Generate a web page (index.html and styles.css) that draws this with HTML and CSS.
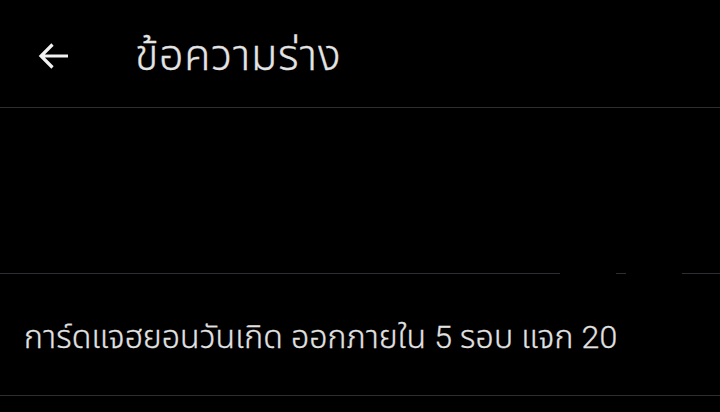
FILE: index.html
```html
<!DOCTYPE html>
<html lang="th">
<head>
<meta charset="utf-8">
<link rel="stylesheet" href="styles.css">
</head>
<body>
<div class="screen">
  <header class="topbar">
    <button class="back" aria-label="back">
      <svg width="32" height="30" viewBox="0 0 32 30"><path d="M31 15H4M15.5 3.5L4 15l11.5 11.5" fill="none" stroke="#f2f2f2" stroke-width="3.2" stroke-linecap="butt" stroke-linejoin="miter"/></svg>
    </button>
    <h1 class="title">ข้อความร่าง</h1>
  </header>
  <div class="blank"></div>
  <div class="row">
    <p class="row-text">การ์ดแจฮยอนวันเกิด ออกภายใน 5 รอบ แจก 20</p>
    <span class="gap g1"></span>
    <span class="gap g2"></span>
  </div>
</div>
</body>
</html>
```
FILE: styles.css
```css
html, body { margin: 0; padding: 0; background: #000; }
.screen {
  width: 720px;
  height: 412px;
  background: #000;
  color: #e2e2e2;
  font-family: Roboto, "Noto Sans Thai", "Noto Sans", sans-serif;
  overflow: hidden;
}
.topbar {
  height: 107px;
  display: flex;
  align-items: center;
  border-bottom: 1px solid #2e2e32;
}
.back {
  background: none;
  border: 0;
  padding: 0;
  margin: 4px 0 0 37px;
  width: 32px;
  height: 30px;
  display: flex;
}
.title {
  margin: 6px 0 0 66px;
  font-size: 43px;
  font-weight: 300;
  letter-spacing: 0.75px;
  -webkit-text-stroke: 0.3px #e4e4e4;
  color: #e4e4e4;
}
.blank { height: 165px; }
.row {
  position: relative;
  height: 123px;
  border-top: 1px solid #2e2e32;
  border-bottom: 1px solid #2e2e32;
  display: flex;
  align-items: center;
  box-sizing: border-box;
}
.row-text {
  margin: 6px 0 0 24px;
  font-size: 32px;
  font-weight: 300;
  letter-spacing: 0.15px;
  -webkit-text-stroke: 0.3px #e2e2e2;
  color: #e2e2e2;
}
.gap { position: absolute; top: -1px; height: 1px; background: #000; }
.g1 { left: 560px; width: 56px; }
.g2 { left: 626px; width: 56px; }
```
